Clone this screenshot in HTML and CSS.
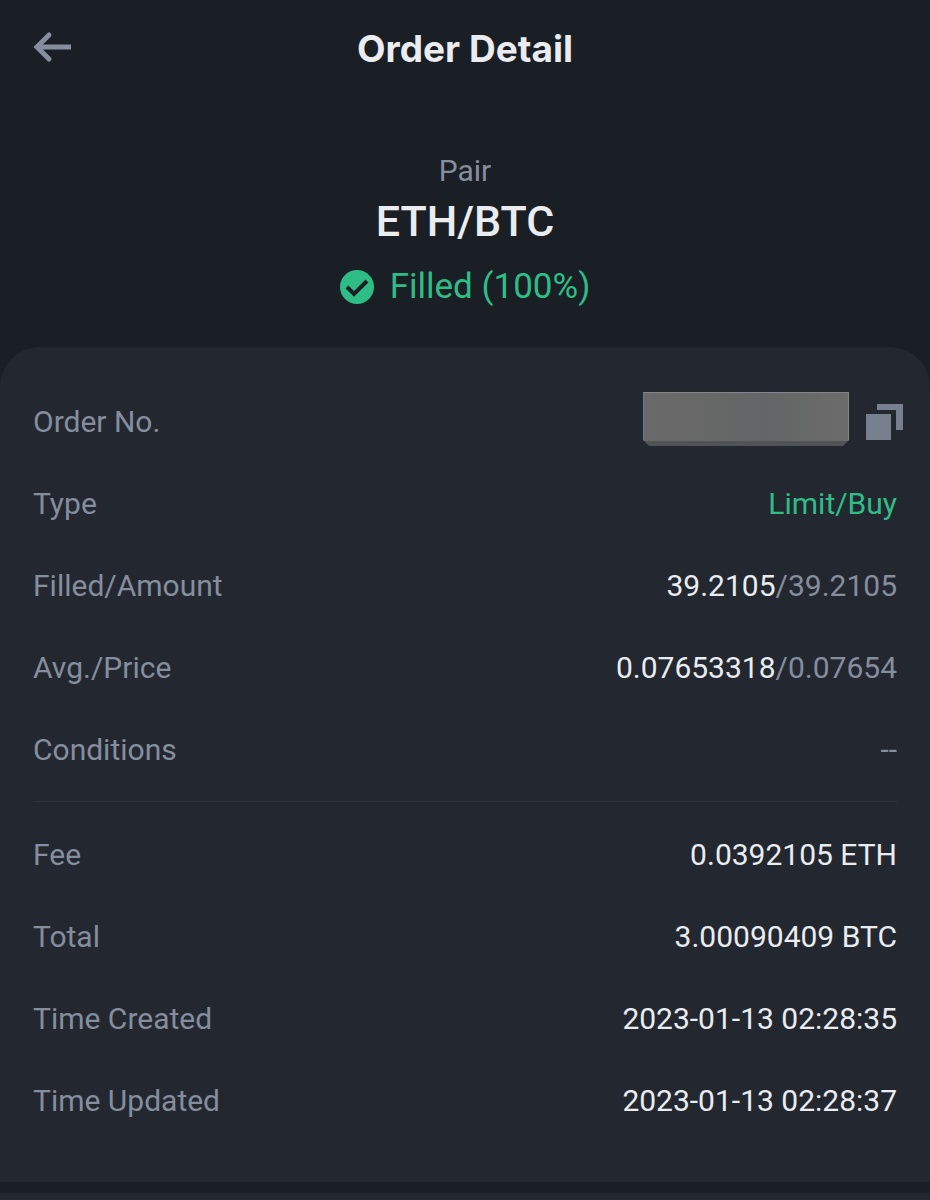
FILE: index.html
```html
<!DOCTYPE html>
<html lang="en">
<head>
  <meta charset="UTF-8" />
  <title>Order Detail</title>
  <meta name="viewport" content="width=device-width, initial-scale=1.0" />
  <link rel="stylesheet" href="styles.css">
</head>
<body>

  <header class="topbar">
    <button type="button" class="icon-btn" aria-label="Back">
      <svg width="40" height="36" viewBox="0 0 40 36" fill="none" stroke="currentColor" stroke-width="5">
        <path d="M38 16H4" />
        <path d="M16 4L4 16l12 12" stroke-linecap="round" />
      </svg>
    </button>
    <h1>Order Detail</h1>
  </header>

  <!-- Pair and status -->
  <section class="summary">
    <div class="summary-label">Pair</div>
    <h2>ETH/BTC</h2>
    <div class="status">
      <svg width="34" height="34" viewBox="0 0 34 34">
        <circle cx="17" cy="17" r="17" fill="#2ebd85" />
        <path d="M7 17l7 7L27 11" fill="none" stroke="#1a1e25" stroke-width="4" />
      </svg>
      <span>Filled (100%)</span>
    </div>
  </section>

  <!-- Order details -->
  <main class="card">
    <dl>
      <div class="row">
        <dt>Order No.</dt>
        <dd class="order-no">
          <span class="mask"></span>
          <button type="button" class="icon-btn" aria-label="Copy order number">
            <svg width="37" height="36" viewBox="0 0 37 36" fill="currentColor">
              <path d="M0 10h25v26H0zM11 0h26v26h-7V6H11z" />
            </svg>
          </button>
        </dd>
      </div>
      <div class="row">
        <dt>Type</dt>
        <dd class="buy">Limit/Buy</dd>
      </div>
      <div class="row">
        <dt>Filled/Amount</dt>
        <dd>39.2105<span class="muted">/39.2105</span></dd>
      </div>
      <div class="row">
        <dt>Avg./Price</dt>
        <dd>0.07653318<span class="muted">/0.07654</span></dd>
      </div>
      <div class="row">
        <dt>Conditions</dt>
        <dd class="muted">--</dd>
      </div>
    </dl>
    <hr>
    <dl>
      <div class="row">
        <dt>Fee</dt>
        <dd>0.0392105 ETH</dd>
      </div>
      <div class="row">
        <dt>Total</dt>
        <dd>3.00090409 BTC</dd>
      </div>
      <div class="row">
        <dt>Time Created</dt>
        <dd>2023-01-13 02:28:35</dd>
      </div>
      <div class="row">
        <dt>Time Updated</dt>
        <dd>2023-01-13 02:28:37</dd>
      </div>
    </dl>
  </main>

  <div class="next-card"></div>

</body>
</html>
```
FILE: styles.css
```css
* {
  box-sizing: border-box;
}

body {
  margin: 0;
  min-height: 100vh;
  display: flex;
  flex-direction: column;
  background: #1a1e25;
  color: #eaecef;
  font-family: Roboto, 'Liberation Sans', sans-serif;
  font-size: 30px;
  line-height: 40px;
}

h1,
h2,
dl,
dd {
  margin: 0;
}

.topbar {
  display: grid;
  grid-template-columns: 40px 1fr 40px;
  align-items: center;
  height: 97px;
  padding: 0 33px;
}

h1 {
  font-family: Inter, sans-serif;
  font-size: 37px;
  font-weight: 700;
  text-align: center;
}

.icon-btn {
  display: flex;
  padding: 0;
  border: none;
  background: none;
  color: #848e9c;
  cursor: pointer;
}

.summary {
  padding: 54px 33px 38px;
  text-align: center;
}

.summary-label {
  color: #848e9c;
}

h2 {
  font-size: 43px;
  font-weight: 500;
  line-height: 60px;
}

.status {
  display: flex;
  align-items: center;
  justify-content: center;
  gap: 16px;
  margin-top: 14px;
  color: #2ebd85;
  font-size: 35px;
  line-height: 44px;
}

.card {
  padding: 34px 33px 40px;
  background: #232730;
  border-radius: 40px 40px 0 0;
}

.row {
  display: flex;
  align-items: center;
  justify-content: space-between;
  height: 82px;
}

dt,
.muted {
  color: #848e9c;
}

.buy {
  color: #2ebd85;
}

.order-no {
  display: flex;
  align-items: center;
  gap: 17px;
  margin-right: -6px;
}

.order-no .icon-btn {
  color: #76808f;
}

/* covers the order number */
.mask {
  width: 206px;
  height: 54px;
  margin-bottom: 6px;
  background: linear-gradient(to right, #6a6a6a, #646566 60%, #6c6c6c);
  border: 1px solid #858585;
  border-left-color: #6f7590;
  border-bottom: 5px solid #505357;
  clip-path: polygon(0 0, 100% 0, 100% 48px, 200px 100%, 6px 100%, 0 48px);
}

hr {
  height: 1px;
  margin: 10px 0 12px;
  border: none;
  background: #2e333c;
}

.next-card {
  flex: 1;
  margin-top: 11px;
  background: #232730;
}
```
